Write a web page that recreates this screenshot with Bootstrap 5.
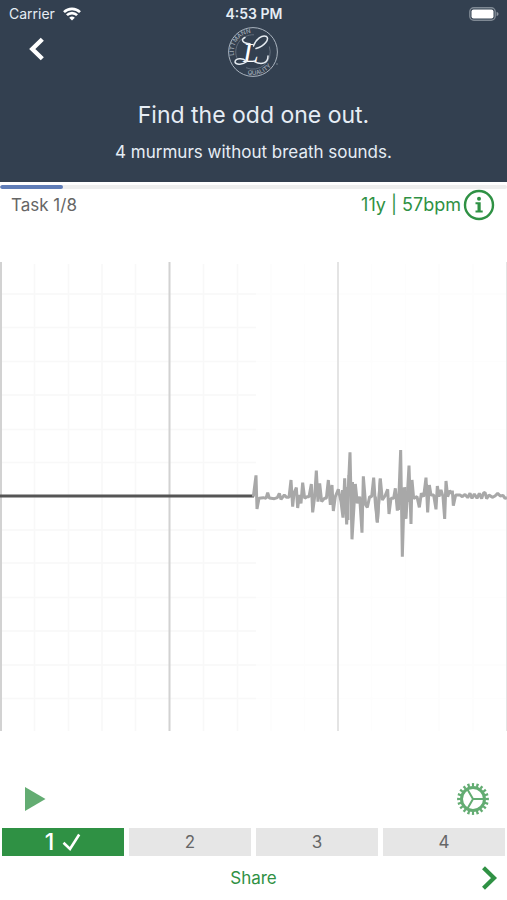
<!DOCTYPE html>
<html lang="en">
<head>
<meta charset="utf-8">
<meta name="viewport" content="width=device-width, initial-scale=1">
<title>Find the odd one out</title>
<link href="https://cdn.jsdelivr.net/npm/bootstrap@5.3.0/dist/css/bootstrap.min.css" rel="stylesheet">
<style>
  body { font-family: Inter, "Liberation Sans", sans-serif; font-size: 17px; line-height: 24px; color: #666; background: #fff; }
  svg { display: block; }
  .app-header { background: #334050; color: #e6edf5; padding-bottom: 18px; }
  .status-row { font-size: 14px; line-height: 16px; padding: 6px 8px 0 9px; }
  .status-row > * { flex: 1 1 0; }
  .status-time { font-weight: 600; }
  .brand-row { height: 60px; padding: 0 25px; }
  .brand-row > * { flex: 1 1 0; }
  .task-title { font-size: 23px; line-height: 30px; font-weight: 400; margin-top: 18px; }
  .task-hint { font-size: 17px; line-height: 24px; margin-top: 10px; }
  .task-progress { height: 4px; margin-top: 3px; background: #eee; --bs-progress-bar-bg: #5f7db8; }
  .task-progress .progress-bar { border-radius: 2px; }
  .info-row { padding: 0 12px 0 11px; height: 32px; }
  .leaf { color: #2f9144; }
  .plain-btn { background: none; border: 0; padding: 0; }
  .patient-btn { font-size: 18px; gap: 2px; }
  .scope { margin-top: 41px; }
  .scope svg { height: 469px; }
  .scope path, .scope polyline { vector-effect: non-scaling-stroke; fill: none; }
  .tool-row { padding: 0 17px 0 24px; height: 36px; margin-top: 50px; }
  .soft-leaf { color: #63ac72; }
  .answers { gap: 5px; padding: 0 2px; margin-top: 11px; }
  .answer { flex: 1 1 0; height: 28px; border: 0; padding: 0; background: #e6e6e6; color: #666; font-size: 17px; line-height: 28px; }
  .answer.chosen { background: #2f9144; color: #fff; font-size: 23px; font-weight: 500; }
  .foot-row { height: 44px; padding: 0 9px; }
  .foot-row > * { flex: 1 1 0; }
</style>
<script src="https://cdn.jsdelivr.net/npm/bootstrap@5.3.0/dist/js/bootstrap.bundle.min.js"></script>
</head>
<body>
<div class="d-flex flex-column min-vh-100">
  <header class="app-header">
    <div class="status-row d-flex align-items-center">
      <div class="d-flex align-items-center gap-2">
        <span>Carrier</span>
        <svg width="18" height="14" viewBox="0 0 18 14" aria-hidden="true" fill="none" stroke="#fff" stroke-width="2.6">
          <path d="M1 5.2a11.3 11.3 0 0 1 16 0M3.9 8.2a7.2 7.2 0 0 1 10.2 0"/>
          <path d="M9 13.6 6.2 10.8a4 4 0 0 1 5.6 0z" fill="#fff" stroke="none"/>
        </svg>
      </div>
      <div class="status-time text-center">4:53 PM</div>
      <div class="d-flex justify-content-end">
        <svg width="30" height="14" viewBox="0 0 30 14" aria-hidden="true">
          <rect x=".8" y=".8" width="25.4" height="12.4" rx="4" fill="none" stroke="#7f8994" stroke-width="1.4"/>
          <rect x="2.5" y="2.5" width="22" height="9" rx="2" fill="#fff"/>
          <path d="M27.6 4.8v4.4q2-.8 2-2.2t-2-2.2" fill="#8b949e"/>
        </svg>
      </div>
    </div>
    <div class="brand-row d-flex align-items-center">
      <div>
        <button class="plain-btn" type="button" aria-label="Back">
          <svg width="24" height="24" viewBox="0 0 24 24" fill="none" stroke="#fff" stroke-width="4.4"><path d="M17.300 2.200 7.300 12l10 9.800"/></svg>
        </button>
      </div>
      <div class="d-flex justify-content-center">
        <svg width="52" height="52" viewBox="0 0 52 52" role="img" aria-label="Littmann Quality" fill="none" stroke="#e4eaf0">
          <circle cx="26" cy="26" r="24.400" stroke="#aab4bf" stroke-width="1"/>
          <path d="M10.500 33.500A17.200 17.200 0 0 1 27 8.800M42.300 20.500A17.200 17.200 0 0 1 19 41.700" stroke="#6d7987" stroke-width=".8"/>
          <path id="arcTop" d="M7 29.500A19.300 19.300 0 0 1 40 12.700" stroke="none"/>
          <path id="arcLow" d="M20.500 48.200A22.800 22.800 0 0 0 48.700 24" stroke="none"/>
          <g fill="#a3adb8" stroke="none" font-family="Inter, sans-serif" font-size="6" font-weight="500">
            <text><textPath href="#arcTop">LITTMANN</textPath></text>
            <text><textPath href="#arcLow">QUALITY</textPath></text>
          </g>
          <text x="16" y="36" fill="#fff" stroke="none" font-family="'Liberation Serif', serif" font-style="italic" font-size="28">L</text>
          <path d="M26.500 20C29 13 35 8.500 39.500 10.500 42.500 13 38 20 29 22.500M23 17.800C16 17.500 13 13.500 18 11.500M19 34.800C15 31.500 8.500 32.500 8 36 9 39.500 16 38.500 20 35.500M27 35.400C35 39.500 41 37 41 30" stroke-width="1.500" stroke-linecap="round"/>
          <circle cx="50" cy="38" r=".7" fill="#8d98a4" stroke="none"/>
        </svg>
      </div>
      <div></div>
    </div>
    <h1 class="task-title text-center mb-0">Find the odd one out.</h1>
    <p class="task-hint text-center mb-0">4 murmurs without breath sounds.</p>
  </header>

  <div class="progress task-progress" role="progressbar" aria-label="Task progress" aria-valuenow="1" aria-valuemin="0" aria-valuemax="8">
    <div class="progress-bar" style="width:12.5%"></div>
  </div>

  <div class="info-row d-flex justify-content-between align-items-center">
    <span>Task 1/8</span>
    <button class="plain-btn patient-btn leaf d-flex align-items-center" type="button">
      <span>11y | 57bpm</span>
      <svg width="32" height="32" viewBox="0 0 32 32" aria-hidden="true"><circle cx="16" cy="16" r="14" fill="none" stroke="currentColor" stroke-width="2.400"/><path d="M12.500 13.300h5.200v8.200h2v2h-7.200v-2h2v-6.200h-2z" fill="currentColor"/><circle cx="16" cy="9.800" r="2" fill="currentColor"/></svg>
    </button>
  </div>

  <main class="scope">
    <svg class="w-100" viewBox="0 262 507 469" preserveAspectRatio="none" role="img" aria-label="Heart sound waveform">
      <path stroke="#f8f8f8" stroke-width="1.500" d="M34.500 264V731M68.500 264V731M102 264V731M135.500 264V731M203.500 264V731M237.500 264V731M0 294H256M0 327.500H256M0 361.500H256M0 395H256M0 429.500H256M0 462.500H256M0 530H256M0 563H256M0 597.500H256M0 631H256M0 665H256M0 698.500H256"/>
      <path stroke="#fdfdfd" stroke-width="1.500" d="M271 264V731M304.500 264V731M371.500 264V731M405.500 264V731M439 264V731M473 264V731M256 294H507M256 361.500H507M256 429.500H507M256 530H507M256 597.500H507M256 665H507M256 698.500H507"/>
      <path stroke="#d2d2d2" stroke-width="2" d="M1 262V731M169.500 262V731"/>
      <path stroke="#e4e4e4" stroke-width="2" d="M338 262V731M507 262V731"/>
      <path stroke="#555" stroke-width="3" d="M0 496H254"/>
      <g stroke="#a8a8a8" stroke-width="3" stroke-linejoin="bevel">
        <polyline transform="translate(245 430) scale(.33333)" points="25,200 33,136 36,237 42,205 55,203 63,205 68,188 73,204 88,206 97,203 103,190 108,208 118,195 125,202 132,202 138,150 143,230 147,190 154,173 158,234 163,195 168,220 173,158 179,205 186,200 192,200 199,162 203,247 209,200 214,122 219,215 224,160 230,215 238,205 244,205 250,150 256,225 261,165 265,243 271,200 280,178 288,215 294,263 299,145 305,283 315,67 321,328 331,162 337,220 344,200 351,308 355,139 362,225 367,232 374,200 380,200 386,143 391,220 397,277 406,146"/>
        <polyline transform="translate(375 430) scale(.33333)" points="1,200 7,277 16,146 22,210 30,198 38,178 42,252 48,205 56,205 61,175 67,242 72,190 77,60 82,380 88,172 93,266 102,107 108,282 111,150 116,205 126,200 133,232 139,190 146,200 153,143 158,247 163,165 168,195 176,195 183,238 187,168 192,200 198,180 204,200 209,267 213,153 218,200 224,182 229,190 232,182 235,227 242,195 255,195 262,200 270,193 278,203 285,190 291,205 298,192 306,205 313,190 320,206 325,190 330,187 335,206 342,195 352,202 360,198 368,190 376,198 384,196 390,205 396,203"/>
        <path stroke-width="2" d="M292 492V500M312 488V502M342 490V512M346 487V518M348.500 475V520M353 482V515M363 480V504M399 487V510M402.500 488V522M405.500 487V519M408 476V502M411 482V504M427 484V500"/>
      </g>
    </svg>
  </main>

  <div class="tool-row d-flex justify-content-between align-items-center">
    <button class="plain-btn soft-leaf" type="button" aria-label="Play">
      <svg width="22" height="24" viewBox="0 0 22 24"><path d="M1 0v24l20.500-12z" fill="currentColor"/></svg>
    </button>
    <button class="plain-btn soft-leaf" type="button" aria-label="Settings">
      <svg width="34" height="34" viewBox="0 0 34 34" fill="none" stroke="currentColor">
        <circle cx="17" cy="17" r="11.500" stroke-width="3"/>
        <circle cx="17" cy="17" r="14.200" stroke-width="3.400" pathLength="40" stroke-dasharray="1 1" stroke-dashoffset=".5"/>
        <path d="M17 17h11M17 17 11.500 7.500M17 17l-5.500 9.500" stroke-width="2"/>
      </svg>
    </button>
  </div>

  <div class="answers d-flex" role="group" aria-label="Answers">
    <button class="answer chosen d-flex justify-content-center align-items-center gap-2" type="button" aria-pressed="true">1
      <svg width="19" height="18" viewBox="0 0 19 18" aria-hidden="true" fill="none" stroke="#fff" stroke-width="2.600"><path d="M1.500 9.800 8 16 17.200 1.500"/></svg>
    </button>
    <button class="answer" type="button">2</button>
    <button class="answer" type="button">3</button>
    <button class="answer" type="button">4</button>
  </div>

  <footer class="foot-row d-flex align-items-center">
    <div></div>
    <div class="text-center"><a class="leaf text-decoration-none" href="#share">Share</a></div>
    <div class="d-flex justify-content-end">
      <button class="plain-btn leaf" type="button" aria-label="Next">
        <svg width="18" height="24" viewBox="0 0 18 24" fill="none" stroke="currentColor" stroke-width="4.200"><path d="M3.500 1.800 14 12 3.500 22.200"/></svg>
      </button>
    </div>
  </footer>
</div>
</body>
</html>
